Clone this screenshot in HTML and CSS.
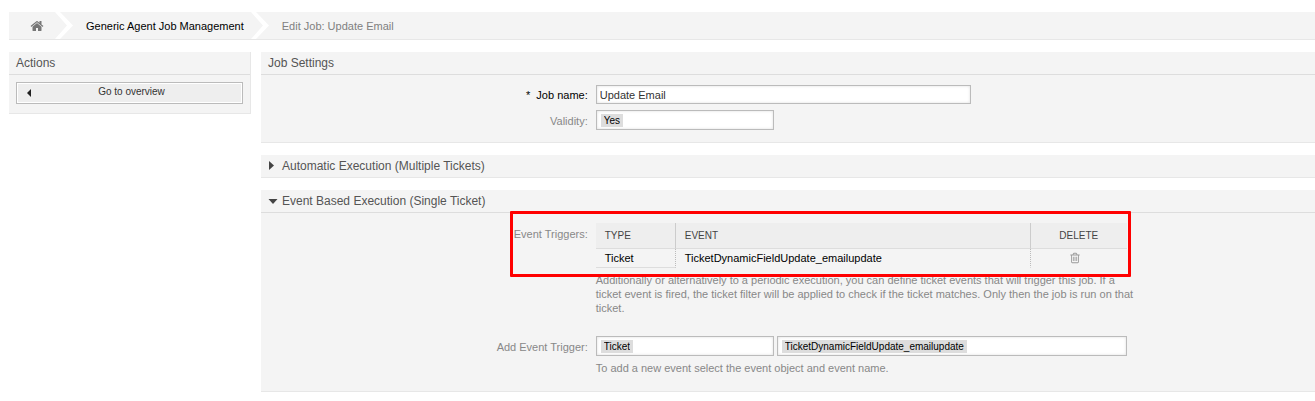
FILE: index.html
```html
<!DOCTYPE html>
<html lang="en">
<head>
    <meta charset="UTF-8">
    <meta name="viewport" content="width=device-width, initial-scale=1.0">
    <title>Edit Job: Update Email</title>
    <link rel="stylesheet" href="styles.css">
</head>
<body>
    <nav class="breadcrumb" aria-label="Breadcrumb">
        <a href="#" class="crumb crumb-home" aria-label="Home">
            <svg class="icon-home" viewBox="0 0 1792 1792"><path d="M1472 992v480q0 26-19 45t-45 19h-384v-384h-256v384h-384q-26 0-45-19t-19-45v-480q0-1 .5-3t.5-3l575-474 575 474q1 2 1 6zm223-69l-62 74q-8 9-21 11h-3q-13 0-21-7l-692-577-692 577q-12 8-24 7-13-2-21-11l-62-74q-8-10-7-23.5t11-21.5l719-599q32-26 76-26t76 26l244 204v-195q0-14 9-23t23-9h192q14 0 23 9t9 23v408l219 182q10 8 11 21.5t-7 23.5z"/></svg>
        </a>
        <svg class="chevron" viewBox="0 0 18 27"><path d="M0 0h5l13 13.5L5 27H0l12-13.5z"/></svg>
        <a href="#" class="crumb">Generic Agent Job Management</a>
        <svg class="chevron" viewBox="0 0 18 27"><path d="M0 0h5l13 13.5L5 27H0l12-13.5z"/></svg>
        <a href="#" class="crumb crumb-current">Edit Job: Update Email</a>
    </nav>

    <div class="layout">
        <aside class="sidebar">
            <section class="widget">
                <h2 class="widget-header">Actions</h2>
                <div class="widget-actions">
                    <button type="button" class="action-btn">
                        <svg class="icon-caret" viewBox="0 0 4 8"><path d="M4 0v8L0 4z"/></svg>
                        <span>Go to overview</span>
                    </button>
                </div>
            </section>
        </aside>

        <main class="content">
            <section class="widget">
                <h2 class="widget-header">Job Settings</h2>
                <div class="widget-body">
                    <div class="field-row">
                        <label class="mandatory" for="jobName"><span class="marker">*</span>Job name:</label>
                        <div class="field">
                            <input type="text" class="text-input" id="jobName" value="Update Email">
                        </div>
                    </div>
                    <div class="field-row">
                        <label for="validity">Validity:</label>
                        <div class="field">
                            <div class="select-box">
                                <select id="validity"><option>Yes</option></select>
                            </div>
                        </div>
                    </div>
                </div>
            </section>

            <section class="widget">
                <h2 class="widget-header collapsed">
                    <svg class="icon-toggle" viewBox="0 0 10 10"><path d="M1 0v9l5-4.500z"/></svg>
                    Automatic Execution (Multiple Tickets)
                </h2>
            </section>

            <section class="widget">
                <h2 class="widget-header">
                    <svg class="icon-toggle" viewBox="0 0 10 10"><path d="M0.500 3h9L5 8z"/></svg>
                    Event Based Execution (Single Ticket)
                </h2>
                <div class="widget-body">
                    <div class="field-row">
                        <span class="label" id="triggersLabel">Event Triggers:</span>
                        <div class="field">
                            <div class="triggers">
                                <table class="data-table" aria-labelledby="triggersLabel">
                                    <thead>
                                        <tr>
                                            <th class="col-type">Type</th>
                                            <th>Event</th>
                                            <th class="col-delete">Delete</th>
                                        </tr>
                                    </thead>
                                    <tbody>
                                        <tr>
                                            <td class="cell-type">Ticket</td>
                                            <td>TicketDynamicFieldUpdate_emailupdate</td>
                                            <td class="cell-delete">
                                                <button type="button" class="delete-btn" aria-label="Delete">
                                                    <svg viewBox="0 0 1792 1792"><path d="M704 736v576q0 14-9 23t-23 9h-64q-14 0-23-9t-9-23v-576q0-14 9-23t23-9h64q14 0 23 9t9 23zm256 0v576q0 14-9 23t-23 9h-64q-14 0-23-9t-9-23v-576q0-14 9-23t23-9h64q14 0 23 9t9 23zm256 0v576q0 14-9 23t-23 9h-64q-14 0-23-9t-9-23v-576q0-14 9-23t23-9h64q14 0 23 9t9 23zm128 724v-948h-896v948q0 22 7 40.5t14.500 27 10.500 8.500h832q3 0 10.500-8.500t14.500-27 7-40.500zm-672-1076h448l-48-117q-7-9-17-11h-317q-10 2-17 11zm928 32v64q0 14-9 23t-23 9h-96v948q0 83-47 143.500t-113 60.500h-832q-66 0-113-58.500t-47-141.500v-952h-96q-14 0-23-9t-9-23v-64q0-14 9-23t23-9h309l70-167q15-37 54-63t79-26h320q40 0 79 26t54 63l70 167h309q14 0 23 9t9 23z"/></svg>
                                                </button>
                                            </td>
                                        </tr>
                                    </tbody>
                                </table>
                                <div class="highlight"></div>
                            </div>
                            <p class="hint">Additionally or alternatively to a periodic execution, you can define ticket events that will trigger this job. If a ticket event is fired, the ticket filter will be applied to check if the ticket matches. Only then the job is run on that ticket.</p>
                        </div>
                    </div>
                    <div class="field-row add-trigger">
                        <label for="eventType">Add Event Trigger:</label>
                        <div class="field">
                            <div class="select-group">
                                <div class="select-box">
                                    <select id="eventType"><option>Ticket</option></select>
                                </div>
                                <div class="select-box select-wide">
                                    <select id="eventName" aria-label="Event name"><option>TicketDynamicFieldUpdate_emailupdate</option></select>
                                </div>
                            </div>
                            <p class="hint">To add a new event select the event object and event name.</p>
                        </div>
                    </div>
                </div>
            </section>
        </main>
    </div>
</body>
</html>
```
FILE: styles.css
```css
* {
    margin: 0;
    padding: 0;
    box-sizing: border-box;
}

body {
    font-family: "Liberation Sans", Arial, sans-serif;
    font-size: 11px;
    line-height: 14px;
    color: #000;
    background: #fff;
    padding: 12px 0 8px 9px;
}

.breadcrumb {
    display: flex;
    align-items: center;
    height: 28px;
    background: #f4f4f4;
    border-bottom: 1px solid #e7e7e7;
    margin-bottom: 12px;
}

.crumb {
    color: #000;
    text-decoration: none;
    padding: 0 7px 0 13px;
}

.crumb-home {
    padding: 0 11px 0 21px;
}

.crumb-current {
    color: #808080;
}

.icon-home {
    display: block;
    width: 14px;
    height: 14px;
    fill: #777;
}

.chevron {
    width: 18px;
    height: 27px;
    fill: #fff;
}

.layout {
    display: flex;
    align-items: flex-start;
    gap: 10px;
}

.sidebar {
    flex: 0 0 242px;
}

.sidebar .widget {
    border-right: 1px solid #e7e7e7;
}

.content {
    flex: 1;
    min-width: 0;
    display: flex;
    flex-direction: column;
    gap: 12px;
}

.widget {
    background: #f4f4f4;
    border-bottom: 1px solid #e7e7e7;
}

.widget-header {
    display: flex;
    align-items: center;
    gap: 4px;
    height: 23px;
    padding: 0 7px;
    font-size: 12px;
    font-weight: normal;
    color: #555;
    border-bottom: 1px solid #ddd;
}

.widget-header.collapsed {
    height: 22px;
    border-bottom: none;
}

.icon-toggle {
    width: 10px;
    height: 10px;
    fill: #444;
}

.widget-actions {
    padding: 7px 7px 9px;
}

.action-btn {
    display: flex;
    align-items: center;
    width: 100%;
    height: 22px;
    padding: 0 10px;
    font-family: inherit;
    font-size: 10px;
    line-height: 14px;
    color: #333;
    background: #eee;
    border: 1px solid #bbb;
    box-shadow: inset 0 0 0 1px #fff;
    cursor: pointer;
}

.action-btn span {
    flex: 1;
    padding-bottom: 2px;
    text-align: center;
}

.icon-caret {
    width: 4px;
    height: 8px;
    fill: #222;
}

.widget-body {
    display: flex;
    flex-direction: column;
    gap: 6px;
    padding: 10px 0 12px;
}

.field-row {
    display: grid;
    grid-template-columns: 31% 1fr;
    gap: 8px;
}

.field-row label,
.label {
    padding-top: 4px;
    text-align: right;
    color: #888;
}

.field-row label.mandatory {
    padding-top: 3px;
    color: #000;
}

.marker {
    margin-right: 6px;
}

.field {
    max-width: 531px;
}

.text-input {
    display: block;
    width: 100%;
    max-width: 375px;
    height: 19px;
    padding: 0 3px;
    font-family: inherit;
    font-size: 11px;
    color: #333;
    background: #fff;
    border: 1px solid #bbb;
    box-shadow: inset 0 0 3px #ddd;
}

.select-group {
    display: flex;
    gap: 3px;
}

.select-box {
    display: flex;
    align-items: center;
    width: 178px;
    height: 20px;
    padding: 0 4px;
    background: #fff;
    border: 1px solid #bbb;
    box-shadow: inset 0 0 3px #ddd;
}

.select-wide {
    flex: 1;
}

/* the select shrinks to its value, so it reads as a tag */
.select-box select {
    appearance: none;
    field-sizing: content;
    height: 13px;
    padding: 0 3px;
    font-family: inherit;
    font-size: 10px;
    line-height: 13px;
    color: #000;
    background: #ddd;
    border: none;
}

.triggers {
    position: relative;
}

.data-table {
    width: 100%;
    table-layout: fixed;
    border-collapse: separate;
    border-spacing: 0;
}

.data-table th {
    height: 26px;
    padding: 0 9px;
    font-size: 10px;
    font-weight: normal;
    text-align: left;
    text-transform: uppercase;
    color: #444;
    background: #eee;
    border-bottom: 1px solid #ddd;
}

.data-table td {
    height: 19px;
    padding: 0 9px;
    border-bottom: 1px solid transparent;
}

.data-table th:not(:last-child) {
    border-right: 1px solid #ccc;
}

.data-table td:not(:last-child) {
    border-right: 1px dotted #bbb;
}

.data-table .cell-type {
    border-bottom-color: #ddd;
}

.data-table .col-type {
    width: 80px;
}

.data-table .col-delete {
    width: 96px;
    text-align: center;
}

.data-table .cell-delete {
    padding-right: 16px;
}

.delete-btn {
    display: block;
    margin: 0 auto;
    background: none;
    border: none;
    cursor: pointer;
}

.delete-btn svg {
    display: block;
    width: 12px;
    height: 12px;
    fill: #999;
}

.highlight {
    position: absolute;
    top: -12px;
    right: -4px;
    bottom: -9px;
    left: -86px;
    border: 3px solid #f00;
    border-radius: 1px;
    pointer-events: none;
}

/* runs a little past the table */
.hint {
    margin-top: 5px;
    margin-right: -12px;
    color: #888;
}

.add-trigger {
    margin-top: 15px;
    padding-bottom: 4px;
}
```
